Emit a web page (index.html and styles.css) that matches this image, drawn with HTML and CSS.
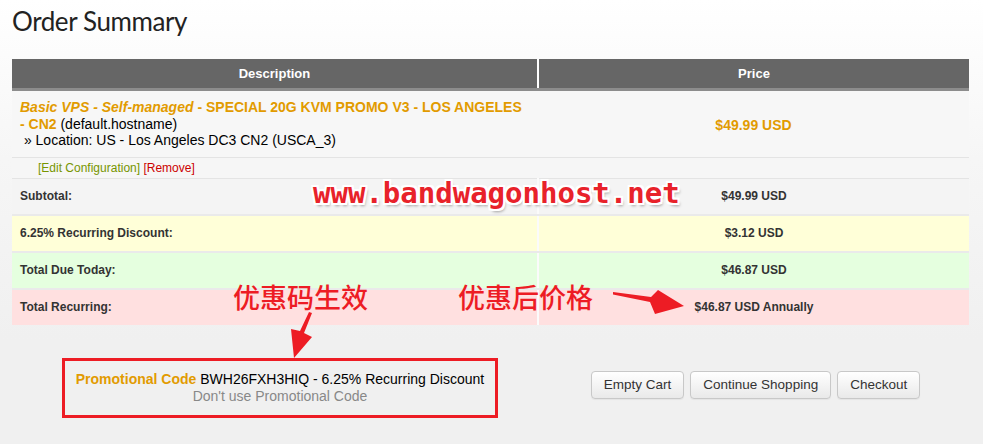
FILE: index.html
```html
<!DOCTYPE html>
<html lang="en">
<head>
  <meta charset="UTF-8">
  <meta name="viewport" content="width=device-width, initial-scale=1.0">
  <title>Order Summary</title>
  <link rel="stylesheet" href="styles.css">
</head>
<body>

  <div class="page">
    <h1>Order Summary</h1>

    <table class="cart">
      <colgroup>
        <col class="col-desc">
        <col class="col-price">
      </colgroup>
      <thead>
        <tr>
          <th>Description</th>
          <th>Price</th>
        </tr>
      </thead>
      <tbody>
        <tr class="item">
          <td class="item-desc">
            <strong class="product"><em>Basic VPS - Self-managed</em> - SPECIAL 20G KVM PROMO V3 - LOS ANGELES - CN2</strong> (default.hostname)<br>
            &nbsp;» Location: US - Los Angeles DC3 CN2 (USCA_3)
          </td>
          <td class="amount">$49.99 USD</td>
        </tr>
        <tr class="item-actions">
          <td><a href="#" class="edit">[Edit Configuration]</a> <a href="#" class="remove">[Remove]</a></td>
          <td></td>
        </tr>
        <tr class="total subtotal">
          <td>Subtotal:</td>
          <td>$49.99 USD</td>
        </tr>
        <tr class="total discount">
          <td>6.25% Recurring Discount:</td>
          <td>$3.12 USD</td>
        </tr>
        <tr class="total due">
          <td>Total Due Today:</td>
          <td>$46.87 USD</td>
        </tr>
        <tr class="total recurring">
          <td>Total Recurring:</td>
          <td>$46.87 USD Annually</td>
        </tr>
      </tbody>
    </table>

    <div class="cart-footer">
      <div class="promo">
        <p><strong>Promotional Code</strong> BWH26FXH3HIQ - 6.25% Recurring Discount</p>
        <p class="promo-remove">Don't use Promotional Code</p>
      </div>
      <div class="cart-buttons">
        <button>Empty Cart</button>
        <button>Continue Shopping</button>
        <button>Checkout</button>
      </div>
    </div>

    <!-- anotaciones sobre la captura -->
    <div class="watermark">www.bandwagonhost.net</div>
    <div class="note note-code">优惠码生效</div>
    <div class="note note-price">优惠后价格</div>
    <svg class="arrows" width="983" height="444" viewBox="0 0 983 444">
      <polygon points="309,312 312,313 304,333 312,337 294,358 291,329 300,331" fill="#ed1c24"/>
      <polygon points="613,292 651,297 658,290 684,306 655,314 650,302 613,294.5" fill="#ed1c24"/>
    </svg>
  </div>

</body>
</html>
```

FILE: styles.css
```css
body {
  margin: 0;
  font-family: "Liberation Sans", Arial, sans-serif;
  color: #000;
  background: linear-gradient(#fff 0, #f6f6f6 160px, #f0f0f0 340px, #f0f0f0 100%);
  min-height: 444px;
}

.page {
  position: relative;
  padding: 5px 12px 0;
  height: 439px;
  overflow: hidden;
}

h1 {
  margin: 0 0 22px;
  font-family: Lato, sans-serif;
  font-weight: 400;
  font-size: 26px;
  letter-spacing: -0.4px;
  line-height: 32px;
  color: #222;
}

.cart {
  width: 957px;
  table-layout: fixed;
  border-collapse: collapse;
}

.col-desc {
  width: 526px;
}

.cart th {
  height: 29px;
  padding: 0;
  background: #666;
  border-bottom: 3px solid #8c8c8c;
  color: #fff;
  font-size: 13px;
  font-weight: bold;
}

.cart th + th {
  border-left: 2px solid #fff;
}

.cart td {
  padding: 0 8px;
}

.item td {
  height: 65px;
  padding-top: 8px;
  padding-bottom: 8px;
  background: #f7f7f7;
  border-bottom: 1px solid #e4e4e4;
  font-size: 14px;
  line-height: 16.5px;
  box-sizing: border-box;
}

.product {
  color: #e29b00;
}

.item .amount {
  text-align: center;
  color: #e29b00;
  font-weight: bold;
  padding-top: 10px;
}

.item-actions td {
  height: 20px;
  padding-left: 26px;
  font-size: 12px;
  background: #f6f6f6;
  border-bottom: 1px solid #e4e4e4;
}

.item-actions a {
  text-decoration: none;
}

.edit {
  color: #779500;
}

.remove {
  color: #cc0000;
}

.total td {
  height: 35px;
  font-size: 12px;
  font-weight: bold;
  color: #333;
  border-bottom: 2px solid #eaeaea;
}

.total td + td {
  text-align: center;
  border-left: 2px solid #fbfbfb;
}

.subtotal td {
  background: #f4f4f4;
}

.discount td {
  background: #ffffd8;
}

.due td {
  background: #e5ffdf;
}

.recurring td {
  background: #ffe0e0;
  border-bottom: none;
}

.cart-footer {
  display: grid;
  grid-template-columns: 528px 1fr;
  margin-top: 33px;
}

.promo {
  justify-self: center;
  margin-left: 8px;
  width: 436px;
  box-sizing: border-box;
  padding: 10px 8px;
  border: 3px solid #ed1c24;
  text-align: center;
  font-size: 14px;
  line-height: 17px;
}

.promo p {
  margin: 0;
}

.promo strong {
  color: #e29b00;
}

.promo-remove {
  color: #888;
}

.cart-buttons {
  display: flex;
  justify-content: center;
  gap: 6px;
  margin-top: 13px;
}

.cart-buttons button {
  height: 28px;
  padding: 0 12px;
  font-family: "Liberation Sans", Arial, sans-serif;
  font-size: 13.5px;
  color: #333;
  background: linear-gradient(#fff, #e9e9e9);
  border: 1px solid #c8c8c8;
  border-radius: 4px;
  box-shadow: 0 1px 1px rgba(0,0,0,0.05);
}

.watermark {
  position: absolute;
  left: 313px;
  top: 176px;
  font-family: "DejaVu Sans Mono", monospace;
  font-weight: bold;
  font-size: 29px;
  line-height: 34px;
  color: #e8222a;
  text-shadow: -2px 0 #fff, 2px 0 #fff, 0 -2px #fff, 0 2px #fff,
    -2px -2px #fff, 2px 2px #fff, -2px 2px #fff, 2px -2px #fff,
    2px 3px 3px rgba(0,0,0,0.35);
}

.note {
  position: absolute;
  top: 283px;
  font-family: "Noto Sans CJK SC", sans-serif;
  font-weight: 500;
  font-size: 27px;
  line-height: 27px;
  color: #ed1c24;
}

.note-code {
  left: 233px;
}

.note-price {
  left: 458px;
}

.arrows {
  position: absolute;
  left: 0;
  top: 0;
  pointer-events: none;
}
```
